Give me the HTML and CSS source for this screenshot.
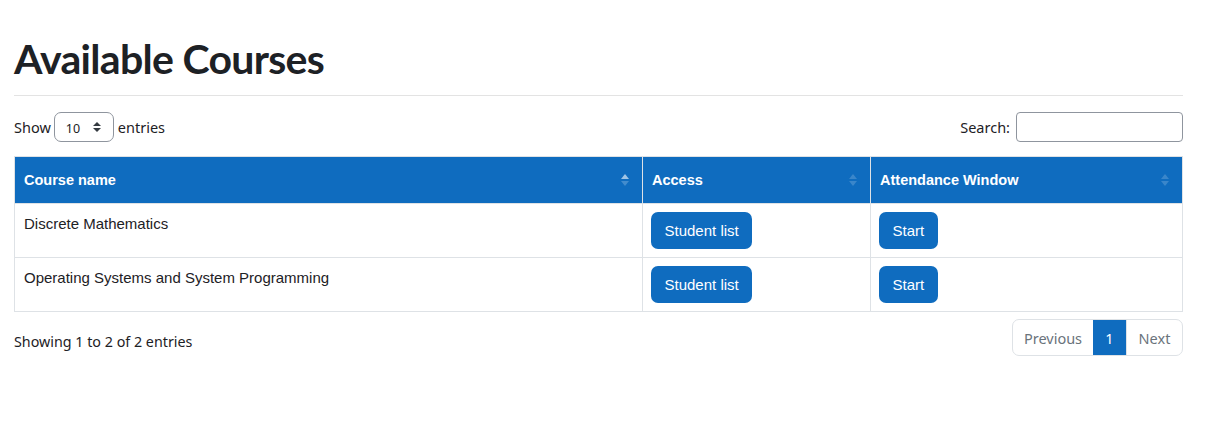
FILE: index.html
```html
<!DOCTYPE html>
<html>
<head>
<meta charset="utf-8">
<link rel="stylesheet" href="styles.css">
</head>
<body>
<div class="page">
  <h2 class="title">Available Courses</h2>
  <hr class="rule">
  <div class="controls">
    <label class="length">Show
      <span class="select"><span class="select-val">10</span>
        <svg class="select-arrows" width="8" height="10" viewBox="0 0 8 10"><path d="M4 0 L8 4 H0 Z M0 6 H8 L4 10 Z" fill="#343a40"/></svg>
      </span>
      entries</label>
    <label class="search">Search: <span class="search-input"></span></label>
  </div>
  <table class="courses">
    <thead>
      <tr>
        <th class="col-name"><div class="th-inner"><span>Course name</span><span class="sort asc"><i class="up"></i><i class="down"></i></span></div></th>
        <th class="col-access"><div class="th-inner"><span>Access</span><span class="sort"><i class="up"></i><i class="down"></i></span></div></th>
        <th class="col-window"><div class="th-inner"><span>Attendance Window</span><span class="sort"><i class="up"></i><i class="down"></i></span></div></th>
      </tr>
    </thead>
    <tbody>
      <tr>
        <td>Discrete Mathematics</td>
        <td><button class="btn">Student list</button></td>
        <td><button class="btn">Start</button></td>
      </tr>
      <tr>
        <td>Operating Systems and System Programming</td>
        <td><button class="btn">Student list</button></td>
        <td><button class="btn">Start</button></td>
      </tr>
    </tbody>
  </table>
  <div class="footer">
    <div class="info">Showing 1 to 2 of 2 entries</div>
    <div class="pager">
      <span class="pg pg-prev">Previous</span>
      <span class="pg pg-active">1</span>
      <span class="pg pg-next">Next</span>
    </div>
  </div>
</div>
</body>
</html>
```
FILE: styles.css
```css
html, body { margin: 0; padding: 0; background: #fff; }
body {
  font-family: "Noto Sans", "Open Sans", sans-serif;
  font-size: 15px;
  color: #1d2125;
}
.page {
  width: 1169px;
  margin-left: 14px;
  padding-top: 36px;
}
.title {
  margin: 0;
  font-family: "Lato", "Noto Sans", sans-serif;
  font-weight: 700;
  font-size: 41px;
  line-height: 46px;
  letter-spacing: -0.7px;
  color: #1d2125;
}
.rule {
  border: 0;
  border-top: 1px solid #e3e3e3;
  margin: 13px 0 0 0;
}
.controls {
  display: flex;
  justify-content: space-between;
  align-items: center;
  margin-top: 16px;
  height: 30px;
}
.length, .search {
  display: flex;
  align-items: center;
  font-size: 14.5px;
}
.select {
  display: inline-flex;
  align-items: center;
  justify-content: space-between;
  box-sizing: border-box;
  width: 60px;
  height: 30px;
  margin: 0 4px 0 3px;
  padding: 0 12px 0 11px;
  border: 1px solid #8f959e;
  border-radius: 7px;
  font-size: 12.5px;
}
.select-val { padding-top: 2px; }
.search-input {
  display: inline-block;
  box-sizing: border-box;
  width: 167px;
  height: 30px;
  margin-left: 6px;
  border: 1px solid #8f959e;
  border-radius: 4px;
}
.courses {
  margin-top: 14px;
  width: 100%;
  border-collapse: collapse;
  font-family: "Liberation Sans", Arial, sans-serif;
  font-size: 15px;
  color: #1d2125;
}
.courses th, .courses td {
  border: 1px solid #dee2e6;
  text-align: left;
  vertical-align: top;
}
.courses th {
  background: #0f6cbf;
  color: #fff;
  font-weight: 700;
  font-size: 14.5px;
  height: 46px;
  padding: 0 10px 0 9px;
  vertical-align: middle;
}
.col-name { width: 608px; }
.col-access { width: 208px; }
.th-inner {
  display: flex;
  align-items: center;
  justify-content: space-between;
}
.sort {
  display: flex;
  flex-direction: column;
  gap: 2px;
  margin-right: 3px;
}
.sort i {
  display: block;
  width: 0;
  height: 0;
  border-left: 4px solid transparent;
  border-right: 4px solid transparent;
}
.sort .up { border-bottom: 5px solid rgba(255,255,255,0.18); }
.sort .down { border-top: 5px solid rgba(255,255,255,0.18); }
.sort.asc .up { border-bottom-color: rgba(255,255,255,0.6); }
.sort.asc .down { border-top-color: rgba(255,255,255,0.22); }
.courses td {
  height: 37px;
  padding: 8px 9px 8px 8px;
  line-height: 22px;
}
.courses td:first-child { padding: 9px 9px 7px 9px; }
.btn {
  display: inline-block;
  box-sizing: border-box;
  height: 37px;
  padding: 0 13.5px;
  background: #0f6cbf;
  color: #fff;
  border: 0;
  border-radius: 7px;
  font-family: "Liberation Sans", Arial, sans-serif;
  font-size: 15px;
  cursor: pointer;
}
.footer {
  display: flex;
  justify-content: space-between;
  align-items: center;
  margin-top: 7px;
}
.info {
  font-size: 14.3px;
  padding-top: 8px;
}
.pager {
  display: flex;
  height: 37px;
  box-sizing: border-box;
  border: 1px solid #dee2e6;
  border-radius: 7px;
  overflow: hidden;
  font-size: 14.5px;
}
.pg {
  display: flex;
  align-items: center;
  justify-content: center;
  color: #6a737b;
}
.pg-prev { width: 80px; }
.pg-active { width: 33px; background: #0f6cbf; color: #fff; }
.pg-next { width: 55px; border-left: 1px solid #dee2e6; }
```
